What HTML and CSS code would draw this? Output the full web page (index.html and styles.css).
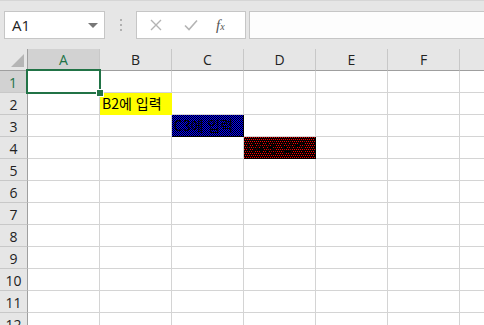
FILE: index.html
```html
<!DOCTYPE html>
<html lang="ko">
<head>
    <meta charset="UTF-8">
    <title>Sheet1</title>
    <link rel="stylesheet" href="styles.css">
</head>
<body>

    <div class="toolbar">
        <div class="name-box">
            <span>A1</span>
            <span class="caret"></span>
        </div>
        <div class="grip"><i></i><i></i><i></i></div>
        <div class="fx-buttons">
            <svg width="12" height="12" viewBox="0 0 12 12"><path d="M1 1L11 11M11 1L1 11" stroke="#b4b4b4" stroke-width="1.4" fill="none"/></svg>
            <svg width="14" height="12" viewBox="0 0 14 12"><path d="M1 6.5L5 10.5L13 1.5" stroke="#b4b4b4" stroke-width="1.6" fill="none"/></svg>
            <span class="fx">f<sub>x</sub></span>
        </div>
        <div class="formula"></div>
    </div>

    <div class="sheet">
        <div class="corner"></div>
        <div class="col-head selected">A</div>
        <div class="col-head">B</div>
        <div class="col-head">C</div>
        <div class="col-head">D</div>
        <div class="col-head">E</div>
        <div class="col-head">F</div>
        <div class="col-head"></div>
    </div>

    <script>
        // build the rows of the sheet
        const sheet = document.querySelector('.sheet');
        const filled = {
            '2-1': { text: 'B2에 입력', cls: 'yellow' },
            '3-2': { text: 'C3에 입력', cls: 'blue' },
            '4-3': { text: 'D4에 입력', cls: 'red' }
        };
        for (let r = 1; r <= 12; r++) {
            const head = document.createElement('div');
            head.className = 'row-head' + (r === 1 ? ' selected' : '');
            head.textContent = r;
            sheet.appendChild(head);
            for (let c = 0; c < 7; c++) {
                const cell = document.createElement('div');
                cell.className = 'cell';
                const f = filled[r + '-' + c];
                if (f) {
                    cell.classList.add(f.cls);
                    cell.textContent = f.text;
                }
                if (r === 1 && c === 0) {
                    cell.innerHTML = '<div class="selection"><span class="handle"></span></div>';
                }
                sheet.appendChild(cell);
            }
        }
    </script>

</body>
</html>
```

FILE: styles.css
```css
body {
    margin: 0;
    background-color: #e6e6e6;
    font-family: "Open Sans", "Noto Sans", sans-serif;
    overflow: hidden;
}
.toolbar {
    display: flex;
    align-items: center;
    height: 49px;
    padding-left: 4px;
    box-sizing: border-box;
    border-top: 1px solid #d6d6d6;
}
.name-box {
    width: 101px;
    height: 28px;
    box-sizing: border-box;
    background-color: #fff;
    border: 1px solid #c6c6c6;
    display: flex;
    align-items: center;
    justify-content: space-between;
    padding: 0 6px 0 7px;
    font-size: 15px;
    color: #222;
}
.caret {
    width: 0;
    height: 0;
    border-left: 5px solid transparent;
    border-right: 5px solid transparent;
    border-top: 5px solid #777;
}
.grip {
    width: 31px;
    display: flex;
    flex-direction: column;
    align-items: center;
    gap: 3px;
}
.grip i {
    width: 2px;
    height: 2px;
    background-color: #b0b0b0;
}
.fx-buttons {
    width: 110px;
    height: 28px;
    box-sizing: border-box;
    background-color: #fff;
    border: 1px solid #c6c6c6;
    display: flex;
    align-items: center;
    padding-left: 13px;
    gap: 22px;
}
.fx {
    font-family: "Liberation Serif", serif;
    font-style: italic;
    font-size: 15px;
    color: #555;
    margin-left: -4px;
}
.fx sub {
    font-size: 10px;
    vertical-align: 0;
}
.formula {
    flex: 1;
    height: 28px;
    margin-left: 3px;
    box-sizing: border-box;
    background-color: #fdfdfd;
    border: 1px solid #c6c6c6;
    border-right: none;
}
.sheet {
    display: grid;
    grid-template-columns: 28px repeat(7, 72px);
    grid-auto-rows: 22px;
    background-color: #fff;
}
.corner {
    background-color: #e6e6e6;
    border-right: 1px solid #9f9f9f;
    border-bottom: 1px solid #9f9f9f;
    position: relative;
}
.corner::after {
    content: "";
    position: absolute;
    right: 3px;
    bottom: 3px;
    border-left: 13px solid transparent;
    border-bottom: 13px solid #b5b5b5;
}
.col-head, .row-head {
    background-color: #e6e6e6;
    color: #222;
    font-size: 14px;
    display: flex;
    align-items: center;
    justify-content: center;
    box-sizing: border-box;
}
.col-head {
    border-right: 1px solid #c8c8c8;
    border-bottom: 1px solid #9f9f9f;
}
.row-head {
    border-right: 1px solid #9f9f9f;
    border-bottom: 1px solid #c8c8c8;
    padding-top: 1px;
}
.col-head.selected {
    background-color: #d2d2d2;
    color: #217346;
    border-bottom: 2px solid #217346;
}
.row-head.selected {
    background-color: #d2d2d2;
    color: #217346;
    border-right: 2px solid #217346;
}
.cell {
    box-sizing: border-box;
    border-right: 1px solid #d4d4d4;
    border-bottom: 1px solid #d4d4d4;
    position: relative;
    font-family: "Noto Sans CJK KR", sans-serif;
    font-size: 14px;
    line-height: 21px;
    padding-left: 2px;
    white-space: nowrap;
    color: #000;
}
.yellow {
    background-color: #ffff00;
    border-color: #ffff00;
}
/* 50% pattern, blue on black */
.blue {
    background-color: #000;
    background-image: url("data:image/svg+xml;utf8,<svg xmlns='http://www.w3.org/2000/svg' width='2' height='2' shape-rendering='crispEdges'><rect width='2' height='2' fill='black'/><rect width='1' height='1' fill='blue'/><rect x='1' y='1' width='1' height='1' fill='blue'/></svg>");
    background-size: 2px 2px;
    image-rendering: pixelated;
    border-color: #000;
}
/* 25% pattern, red on black */
.red {
    background-color: #000;
    background-image: url("data:image/svg+xml;utf8,<svg xmlns='http://www.w3.org/2000/svg' width='4' height='4' shape-rendering='crispEdges'><rect width='4' height='4' fill='black'/><rect width='1' height='1' fill='red'/><rect x='2' width='1' height='1' fill='red'/><rect x='1' y='2' width='1' height='1' fill='red'/><rect x='3' y='2' width='1' height='1' fill='red'/></svg>");
    background-size: 4px 4px;
    image-rendering: pixelated;
    border-color: #000;
}
.selection {
    position: absolute;
    left: -2px;
    top: -2px;
    right: -2px;
    bottom: -2px;
    border: 2px solid #217346;
    z-index: 2;
}
.handle {
    position: absolute;
    right: -5px;
    bottom: -5px;
    width: 6px;
    height: 6px;
    background-color: #217346;
    border: 1px solid #fff;
}
```
